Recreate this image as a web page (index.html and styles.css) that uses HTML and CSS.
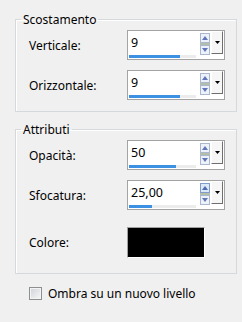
FILE: index.html
```html
<!DOCTYPE html>
<html lang="it">
<head>
    <meta charset="UTF-8">
    <title>Ombra</title>
    <link rel="stylesheet" href="styles.css">
</head>
<body>
    <fieldset class="group">
        <legend>Scostamento</legend>
        <div class="row">
            <span class="field-label">Verticale:</span>
            <div class="spin">
                <div class="spin-value">
                    <span class="spin-text">9</span>
                    <div class="spin-track"><div class="spin-bar" style="width:51px"></div></div>
                </div>
                <svg class="spin-arrows" width="10" height="22" viewBox="0 0 10 22">
                    <rect x="0.5" y="0.5" width="9" height="9" fill="#edf2fa" stroke="#a9b7cf"/>
                    <polygon points="2,7 5,3 8,7" fill="#5f77b6"/>
                    <rect x="0" y="10" width="10" height="2" fill="#b3bfa9"/>
                    <rect x="0.5" y="12.5" width="9" height="9" fill="#edf2fa" stroke="#a9b7cf"/>
                    <polygon points="2,15 5,19 8,15" fill="#5f77b6"/>
                </svg>
                <div class="spin-drop"><svg width="5" height="3" viewBox="0 0 5 3"><polygon points="0,0 5,0 2.5,3" fill="#000"/></svg></div>
            </div>
        </div>
        <div class="row">
            <span class="field-label">Orizzontale:</span>
            <div class="spin">
                <div class="spin-value">
                    <span class="spin-text">9</span>
                    <div class="spin-track"><div class="spin-bar" style="width:51px"></div></div>
                </div>
                <svg class="spin-arrows" width="10" height="22" viewBox="0 0 10 22">
                    <rect x="0.5" y="0.5" width="9" height="9" fill="#edf2fa" stroke="#a9b7cf"/>
                    <polygon points="2,7 5,3 8,7" fill="#5f77b6"/>
                    <rect x="0" y="10" width="10" height="2" fill="#b3bfa9"/>
                    <rect x="0.5" y="12.5" width="9" height="9" fill="#edf2fa" stroke="#a9b7cf"/>
                    <polygon points="2,15 5,19 8,15" fill="#5f77b6"/>
                </svg>
                <div class="spin-drop"><svg width="5" height="3" viewBox="0 0 5 3"><polygon points="0,0 5,0 2.5,3" fill="#000"/></svg></div>
            </div>
        </div>
    </fieldset>

    <fieldset class="group group-second">
        <legend>Attributi</legend>
        <div class="row">
            <span class="field-label">Opacità:</span>
            <div class="spin">
                <div class="spin-value">
                    <span class="spin-text">50</span>
                    <div class="spin-track"><div class="spin-bar" style="width:47px"></div></div>
                </div>
                <svg class="spin-arrows" width="10" height="22" viewBox="0 0 10 22">
                    <rect x="0.5" y="0.5" width="9" height="9" fill="#edf2fa" stroke="#a9b7cf"/>
                    <polygon points="2,7 5,3 8,7" fill="#5f77b6"/>
                    <rect x="0" y="10" width="10" height="2" fill="#b3bfa9"/>
                    <rect x="0.5" y="12.5" width="9" height="9" fill="#edf2fa" stroke="#a9b7cf"/>
                    <polygon points="2,15 5,19 8,15" fill="#5f77b6"/>
                </svg>
                <div class="spin-drop"><svg width="5" height="3" viewBox="0 0 5 3"><polygon points="0,0 5,0 2.5,3" fill="#000"/></svg></div>
            </div>
        </div>
        <div class="row">
            <span class="field-label">Sfocatura:</span>
            <div class="spin">
                <div class="spin-value">
                    <span class="spin-text">25,00</span>
                    <div class="spin-track"><div class="spin-bar" style="width:23px"></div></div>
                </div>
                <svg class="spin-arrows" width="10" height="22" viewBox="0 0 10 22">
                    <rect x="0.5" y="0.5" width="9" height="9" fill="#dbe8f8" stroke="#7f9ccc"/>
                    <polygon points="2,7 5,3 8,7" fill="#4f6bb0"/>
                    <rect x="0" y="10" width="10" height="2" fill="#b3bfa9"/>
                    <rect x="0.5" y="12.5" width="9" height="9" fill="#edf2fa" stroke="#a9b7cf"/>
                    <polygon points="2,15 5,19 8,15" fill="#5f77b6"/>
                </svg>
                <div class="spin-drop"><svg width="5" height="3" viewBox="0 0 5 3"><polygon points="0,0 5,0 2.5,3" fill="#000"/></svg></div>
            </div>
        </div>
        <div class="row row-color">
            <span class="field-label">Colore:</span>
            <div class="swatch"></div>
        </div>
    </fieldset>

    <label class="check">
        <span class="check-box"></span>
        Ombra su un nuovo livello
    </label>
</body>
</html>
```

FILE: styles.css
```css
body {
    margin: 0;
    padding-top: 12px;
    background-color: #f0f0f0;
    color: #000;
    font-family: "Noto Sans", "DejaVu Sans", sans-serif;
    font-size: 12px;
    line-height: 15px;
}
.group {
    margin: 0 0 0 15px;
    width: 222px;
    box-sizing: border-box;
    border: 1px solid #d5d9dc;
    box-shadow: inset 1px 1px 0 #fff;
    padding: 3px 0 11px 0;
    display: flex;
    flex-direction: column;
    gap: 10px;
}
.group-second {
    margin-top: 10px;
}
.group legend {
    margin-left: 5px;
    padding: 0 2px;
    line-height: 15px;
}
.row {
    display: flex;
    align-items: center;
    height: 30px;
    padding-left: 13px;
}
.row-color {
    margin-top: 7px;
    margin-bottom: 5px;
}
.field-label {
    width: 98px;
}
.spin {
    width: 98px;
    height: 30px;
    box-sizing: border-box;
    border: 1px solid #a3a3a3;
    background-color: #fff;
    display: flex;
    align-items: flex-start;
}
.spin-value {
    flex: 1;
    display: flex;
    flex-direction: column;
    padding: 1px 0 0 1px;
}
.spin-text {
    height: 22px;
    line-height: 22px;
    padding-left: 2px;
    font-size: 12.5px;
    margin-bottom: 1px;
}
.spin-track {
    height: 3px;
    margin-right: 4px;
    background-color: #ececec;
}
.spin-bar {
    height: 3px;
    background-color: #3c91e3;
}
.spin-arrows {
    margin-top: 2px;
    margin-right: 1px;
}
.spin-drop {
    width: 12px;
    height: 23px;
    margin-top: 0;
    margin-right: 1px;
    box-sizing: border-box;
    background-color: #f6f6f6;
    border-top: 1px solid #fff;
    border-left: 1px solid #fff;
    border-right: 1px solid #6f6f6f;
    border-bottom: 1px solid #6f6f6f;
    display: flex;
    align-items: center;
    justify-content: center;
}
.swatch {
    width: 78px;
    height: 31px;
    box-sizing: border-box;
    background-color: #000;
    border-top: 1px solid #a0a0a0;
    border-left: 1px solid #a0a0a0;
    border-right: 1px solid #fff;
    border-bottom: 1px solid #fff;
}
.check {
    display: flex;
    align-items: center;
    gap: 6px;
    margin: 12px 0 0 29px;
    height: 15px;
}
.check-box {
    width: 13px;
    height: 13px;
    box-sizing: border-box;
    border: 1px solid #8e8f8f;
    background: linear-gradient(135deg, #cfd3d8, #f7f7f7);
    box-shadow: inset 0 0 0 1px #f4f4f4;
}
```
